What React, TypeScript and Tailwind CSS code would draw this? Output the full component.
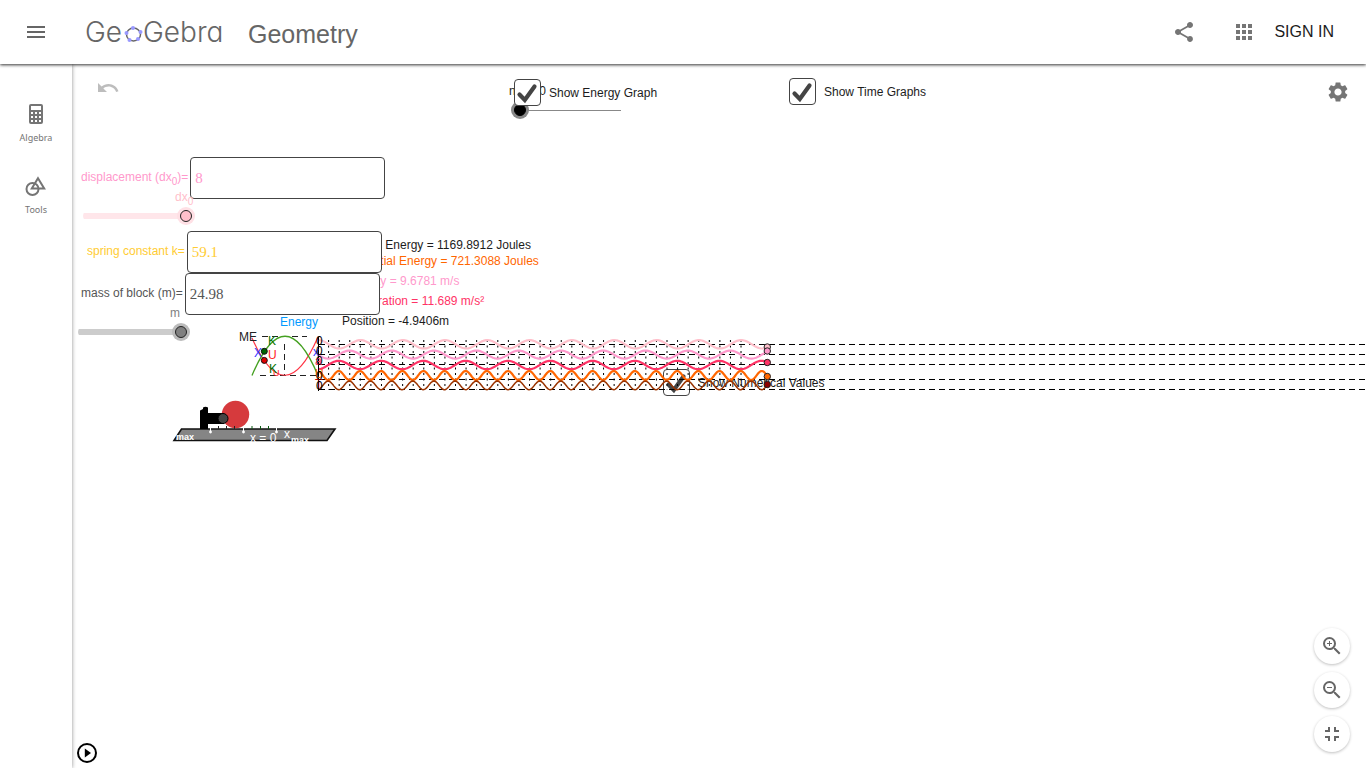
import React, { useState } from "react";
import {
  MdApps,
  MdFullscreenExit,
  MdMenu,
  MdSettings,
  MdShare,
  MdUndo,
  MdZoomIn,
  MdZoomOut,
} from "react-icons/md";

function Logo() {
  const dots = [
    [133, 28],
    [126.5, 33],
    [129.5, 40],
    [138, 39],
    [140.5, 32],
  ];
  return (
    <svg width="148" height="40" viewBox="80 12 148 40" role="img" aria-label="GeoGebra">
      <g className="fill-[#666] font-[Inter,sans-serif] text-[28px] font-light [font-feature-settings:'cv11']">
        <text x="85" y="42">Ge</text>
        <text x="143" y="42">Gebra</text>
      </g>
      <ellipse cx="133.5" cy="34.5" rx="7" ry="6.4" fill="none" stroke="#666" strokeWidth="1.5" />
      {dots.map(([x, y]) => (
        <circle key={x} cx={x} cy={y} r="2" fill="#9999ff" />
      ))}
    </svg>
  );
}

function CalculatorIcon() {
  const cells = [0, 1, 2].flatMap((r) => [0, 1, 2].map((c) => [c, r]));
  return (
    <svg width="24" height="24" viewBox="0 0 24 24">
      <path
        fill="#757575"
        fillRule="evenodd"
        d="M7 2h10a2 2 0 0 1 2 2v16a2 2 0 0 1-2 2H7a2 2 0 0 1-2-2V4a2 2 0 0 1 2-2zM7 4v4h10V4z"
      />
      {cells.map(([c, r]) => (
        <rect key={`${c}-${r}`} x={7 + c * 4} y={10 + r * 4} width="2" height="2" fill="#fff" />
      ))}
    </svg>
  );
}

function ToolsIcon() {
  return (
    <svg width="24" height="24" viewBox="0 0 24 24" fill="none" stroke="#757575" strokeWidth="2">
      <circle cx="8.5" cy="15" r="6" />
      <path d="M14 4.2L20.2 14.5H7.8z" />
    </svg>
  );
}

function SideButton({ label, children }: { label: string; children: React.ReactNode }) {
  return (
    <button className="flex h-[72px] w-full flex-col items-center justify-center gap-1 font-['Noto_Sans',sans-serif] text-[9px] leading-4 text-[#757575]">
      {children}
      {label}
    </button>
  );
}

function CheckOption({ label, className }: { label: string; className: string }) {
  const [on, setOn] = useState(true);
  return (
    <label className={`absolute flex items-center gap-2 text-xs whitespace-nowrap ${className}`}>
      <span className="relative block size-[27px]">
        <input
          type="checkbox"
          checked={on}
          onChange={() => setOn(!on)}
          className="block size-[27px] appearance-none rounded border border-[#444] bg-white"
        />
        {on && (
          <svg className="pointer-events-none absolute inset-0" width="27" height="27" viewBox="0 0 27 27">
            <path d="M5.5 15.5L10.8 21L20.5 7.5" fill="none" stroke="#444" strokeWidth="4.2" strokeLinecap="round" />
          </svg>
        )}
      </span>
      {label}
    </label>
  );
}

function Zero() {
  return <span className="relative top-1 text-[10px]">0</span>;
}

function ValueField({
  id,
  label,
  value,
  place,
  tone,
}: {
  id: string;
  label: React.ReactNode;
  value: string;
  place: string;
  tone: string;
}) {
  return (
    <div className={`absolute flex items-center gap-0.5 ${place} ${tone}`}>
      <label htmlFor={id} className="pb-0.5 text-xs whitespace-nowrap">
        {label}
      </label>
      <input
        id={id}
        defaultValue={value}
        className="h-[42px] w-[195px] rounded border border-[#444] bg-white px-1 font-['Liberation_Serif',serif] text-[15px] outline-none"
      />
    </div>
  );
}

const PERIOD = 42.3;
const START = 319;
const END = 767;

function wave(center: number, amp: number, crest: number, period: number) {
  const pts: string[] = [];
  for (let x = START; x <= END; x += 1) {
    const y = center - amp * Math.cos(((x - crest) / period) * 2 * Math.PI);
    pts.push(`${x},${y.toFixed(2)}`);
  }
  return pts.join(" ");
}

const waves = [
  { color: "#ffc0cb", dot: "#ffc0cb", center: 344.3, amp: 4.2, crest: 360.5, period: PERIOD, end: 347 },
  { color: "#ff99cc", dot: "#ff99cc", center: 354.6, amp: 4, crest: 349.5, period: PERIOD, end: 351 },
  { color: "#ff3366", dot: "#ff3366", center: 365, amp: 4.2, crest: 338.8, period: PERIOD, end: 362.5 },
  { color: "#ff6600", dot: "#ff6600", center: 375.5, amp: 4.5, crest: 338.8, period: PERIOD / 2, end: 376.5 },
  { color: "#993300", dot: "#8b0000", center: 385.4, amp: 4.3, crest: 349.3, period: PERIOD / 2, end: 384.5 },
];

function TimeGraphs() {
  return (
    <g fill="none">
      {[344.5, 354.5, 364.5, 379.5, 389.5].map((y) => (
        <line key={y} x1={START} x2="3000" y1={y} y2={y} stroke="#000" strokeDasharray="6 4" />
      ))}
      {Array.from({ length: 40 }, (_, i) => 328.6 + i * (PERIOD / 4)).map((x) => (
        <line key={x} x1={x} x2={x} y1="340" y2="390" stroke="#000" strokeDasharray="2 3.5" />
      ))}
      {waves.map((w) => (
        <polyline
          key={w.color}
          points={wave(w.center, w.amp, w.crest, w.period)}
          stroke={w.color}
          strokeWidth={w.color === "#993300" ? 1.5 : 2.2}
        />
      ))}
      {waves.map((w) => (
        <circle key={w.color} cx="767.3" cy={w.end} r="3.2" fill={w.dot} stroke="#222" />
      ))}
      <line x1="318.5" x2="318.5" y1="337" y2="391" stroke="#000" />
      <g className="text-xs">
        <text x="313" y="356" fill="#3333ff">x</text>
        <text x="315" y="365" fill="#ff3366">a</text>
        <text x="315" y="378" fill="#ff6600">U</text>
        <text x="315" y="388" fill="#cc0000">T</text>
        {[345, 355, 365, 380, 390].map((y) => (
          <text key={y} x="316" y={y} fill="#000">0</text>
        ))}
      </g>
    </g>
  );
}

function EnergyGraph() {
  return (
    <g fill="none">
      <line x1="262" x2="307" y1="336.5" y2="336.5" stroke="#222" strokeDasharray="6 4" />
      <line x1="260" x2="318" y1="375.5" y2="375.5" stroke="#222" strokeDasharray="6 4" />
      <line x1="284.5" x2="284.5" y1="344" y2="375" stroke="#222" strokeDasharray="6 4" />
      <path d="M252 338Q285 413 318 337" stroke="#ff3344" strokeWidth="1.2" />
      <path d="M252 375.5Q285 297 318 375.5" stroke="#44a020" strokeWidth="1.3" />
      <g className="text-xs">
        <text x="239" y="341" fill="#222">ME</text>
        <text x="254" y="357" fill="#3333ff">X</text>
        <text x="268" y="345" fill="#007000">K</text>
        <text x="268" y="359" fill="#ff2222">U</text>
        <text x="273" y="376" fill="#ff2222" fontSize="9">U</text>
        <text x="269" y="373" fill="#007000">K</text>
        <text x="280" y="326" fill="#0099ff">Energy</text>
      </g>
      <circle cx="264.3" cy="351.3" r="3" fill="#006400" stroke="#111" />
      <circle cx="264.3" cy="360.4" r="3" fill="#e00000" stroke="#111" />
    </g>
  );
}

function SpringRig() {
  return (
    <g>
      <path d="M181.5 429H335L327 440.5H174z" fill="#858585" stroke="#111" strokeWidth="1.6" />
      <circle cx="235.5" cy="414.5" r="13.7" fill="#d63a3d" />
      <path d="M200 410.5L203 409V407.5Q205.5 406 208 407.5V413H224V424H208V429H200z" fill="#000" />
      <circle cx="223" cy="418.5" r="5" fill="#444" stroke="#000" />
      <g stroke="#222">
        <path d="M218.5 426v3M226.5 426v3M234.5 426v3" />
        <path d="M252 426v3M260.5 426v3M268.5 426v3" stroke="#0a5a10" />
        <path d="M210.5 426.5v5M243.5 426.5v5M276.5 426.5v5" stroke="#fff" />
      </g>
      <g fill="#fff">
        <circle cx="210.5" cy="432" r="1.4" />
        <circle cx="243.5" cy="432" r="1.4" />
        <circle cx="276.5" cy="432" r="1.4" />
        <text x="176" y="440" fontSize="9" fontWeight="700">max</text>
        <text x="250" y="442" fontSize="12">x = 0</text>
        <text x="284" y="438" fontSize="12">x</text>
        <text x="291" y="443" fontSize="9" fontWeight="700">max</text>
      </g>
    </g>
  );
}

const rangeBase =
  "absolute h-[18px] appearance-none bg-transparent [&::-webkit-slider-thumb]:size-3 [&::-webkit-slider-thumb]:appearance-none [&::-webkit-slider-thumb]:rounded-full [&::-webkit-slider-thumb]:border";

const roundButton =
  "flex size-9 items-center justify-center rounded-full bg-white text-[#666] shadow-[0_1px_3px_rgba(0,0,0,0.25)]";

export default function App() {
  return (
    <div className="flex h-screen flex-col overflow-hidden bg-white font-['Liberation_Sans',Arial,sans-serif] text-[#1c1c1c]">
      <header className="relative z-20 flex h-16 shrink-0 items-center bg-white pr-8 pl-6 shadow-[0_1px_3px_rgba(0,0,0,0.8)]">
        <button aria-label="Menu" className="text-[#666]">
          <MdMenu size={24} />
        </button>
        <a href="#home" className="ml-8">
          <Logo />
        </a>
        <h1 className="ml-5 pt-1 text-[25px] leading-8 text-[#666]">Geometry</h1>
        <div className="ml-auto flex items-center">
          <button aria-label="Share" className="mr-9 text-[#757575]">
            <MdShare size={24} />
          </button>
          <button aria-label="Apps" className="mr-[18px] text-[#757575]">
            <MdApps size={24} />
          </button>
          <a href="#signin" className="text-base">
            SIGN IN
          </a>
        </div>
      </header>

      <div className="flex min-h-0 flex-1">
        <nav className="relative z-10 w-[72px] shrink-0 bg-white pt-6 shadow-[0_0_4px_rgba(0,0,0,0.45)]">
          <SideButton label="Algebra">
            <CalculatorIcon />
          </SideButton>
          <SideButton label="Tools">
            <ToolsIcon />
          </SideButton>
        </nav>

        <main className="relative min-w-0 flex-1 overflow-hidden">
          <button aria-label="Undo" className="absolute top-3 left-6 text-[#bdbdbd]">
            <MdUndo size={24} />
          </button>
          <button aria-label="Settings" className="absolute top-4 right-4 text-[#757575]">
            <MdSettings size={24} />
          </button>

          <label htmlFor="n" className="absolute top-[19px] left-[437px] text-xs">
            n = 0.0
          </label>
          <input
            id="n"
            type="range"
            defaultValue={0}
            className={`${rangeBase} top-[37px] left-[442px] w-[107px] [&::-webkit-slider-runnable-track]:bg-[linear-gradient(#888,#888)] [&::-webkit-slider-runnable-track]:bg-[length:100%_1px] [&::-webkit-slider-runnable-track]:bg-center [&::-webkit-slider-runnable-track]:bg-no-repeat [&::-webkit-slider-thumb]:border-black [&::-webkit-slider-thumb]:bg-black [&::-webkit-slider-thumb]:shadow-[0_0_0_3px_#888]`}
          />
          <CheckOption label="Show Energy Graph" className="top-[15px] left-[442px]" />
          <CheckOption label="Show Time Graphs" className="top-3.5 left-[717px]" />
          <CheckOption label="Show Numerical Values" className="top-[305px] left-[591px]" />

          <p className="absolute top-[173px] left-[274px] text-xs">Kinetic Energy = 1169.8912 Joules</p>
          <p className="absolute top-[189px] left-[277px] text-xs text-[#ff6600]">Potential Energy = 721.3088 Joules</p>
          <p className="absolute top-[209px] left-[273px] text-xs text-[#ff99cc]">Velocity = 9.6781 m/s</p>
          <p className="absolute top-[229px] left-[270px] text-xs text-[#ff3366]">Acceleration = 11.689 m/s²</p>
          <p className="absolute top-[249px] left-[270px] text-xs">Position = -4.9406m</p>

          <ValueField
            id="dx"
            label={<>displacement (dx<Zero />)=</>}
            value="8"
            place="top-[93px] left-[9px]"
            tone="text-[#ff99cc]"
          />
          <ValueField id="k" label="spring constant k=" value="59.1" place="top-[167px] left-[15px]" tone="text-[#ffcc33]" />
          <ValueField id="mass" label="mass of block (m)=" value="24.98" place="top-[209px] left-[9px]" tone="text-[#555]" />

          <label htmlFor="dx-slider" className="absolute top-[125px] left-[103px] text-xs text-[#ffc0cb]">
            dx<Zero />
          </label>
          <input
            id="dx-slider"
            type="range"
            defaultValue={100}
            className={`${rangeBase} top-[143px] left-[11px] w-[109px] [&::-webkit-slider-runnable-track]:rounded-full [&::-webkit-slider-runnable-track]:bg-[linear-gradient(#ffe6ea,#ffe6ea)] [&::-webkit-slider-runnable-track]:bg-[length:100%_6px] [&::-webkit-slider-runnable-track]:bg-center [&::-webkit-slider-runnable-track]:bg-no-repeat [&::-webkit-slider-thumb]:border-[#222] [&::-webkit-slider-thumb]:bg-[#ffc0cb] [&::-webkit-slider-thumb]:shadow-[0_0_0_3px_#ffe0e5]`}
          />
          <label htmlFor="m-slider" className="absolute top-[241px] left-[98px] text-xs text-[#808080]">
            m
          </label>
          <input
            id="m-slider"
            type="range"
            defaultValue={100}
            className={`${rangeBase} top-[259px] left-[6px] w-[109px] [&::-webkit-slider-runnable-track]:rounded-full [&::-webkit-slider-runnable-track]:bg-[linear-gradient(#ccc,#ccc)] [&::-webkit-slider-runnable-track]:bg-[length:100%_6px] [&::-webkit-slider-runnable-track]:bg-center [&::-webkit-slider-runnable-track]:bg-no-repeat [&::-webkit-slider-thumb]:border-[#222] [&::-webkit-slider-thumb]:bg-[#808080] [&::-webkit-slider-thumb]:shadow-[0_0_0_3px_#bbb]`}
          />

          <svg className="pointer-events-none absolute inset-0 size-full" aria-label="Energy, time graphs and spring">
            <g transform="translate(-72 -64)">
              <EnergyGraph />
              <TimeGraphs />
              <SpringRig />
            </g>
          </svg>

          <button aria-label="Play" className="absolute bottom-1 left-1">
            <svg width="22" height="22" viewBox="0 0 22 22">
              <circle cx="11" cy="11" r="9" fill="#fff" stroke="#000" strokeWidth="2" />
              <path d="M8.8 6.5L15 11L8.8 15.5z" />
            </svg>
          </button>

          <div className="absolute right-4 bottom-4 flex flex-col gap-2">
            <button aria-label="Zoom in" className={roundButton}>
              <MdZoomIn size={24} />
            </button>
            <button aria-label="Zoom out" className={roundButton}>
              <MdZoomOut size={24} />
            </button>
            <button aria-label="Exit full screen" className={roundButton}>
              <MdFullscreenExit size={24} />
            </button>
          </div>
        </main>
      </div>
    </div>
  );
}
